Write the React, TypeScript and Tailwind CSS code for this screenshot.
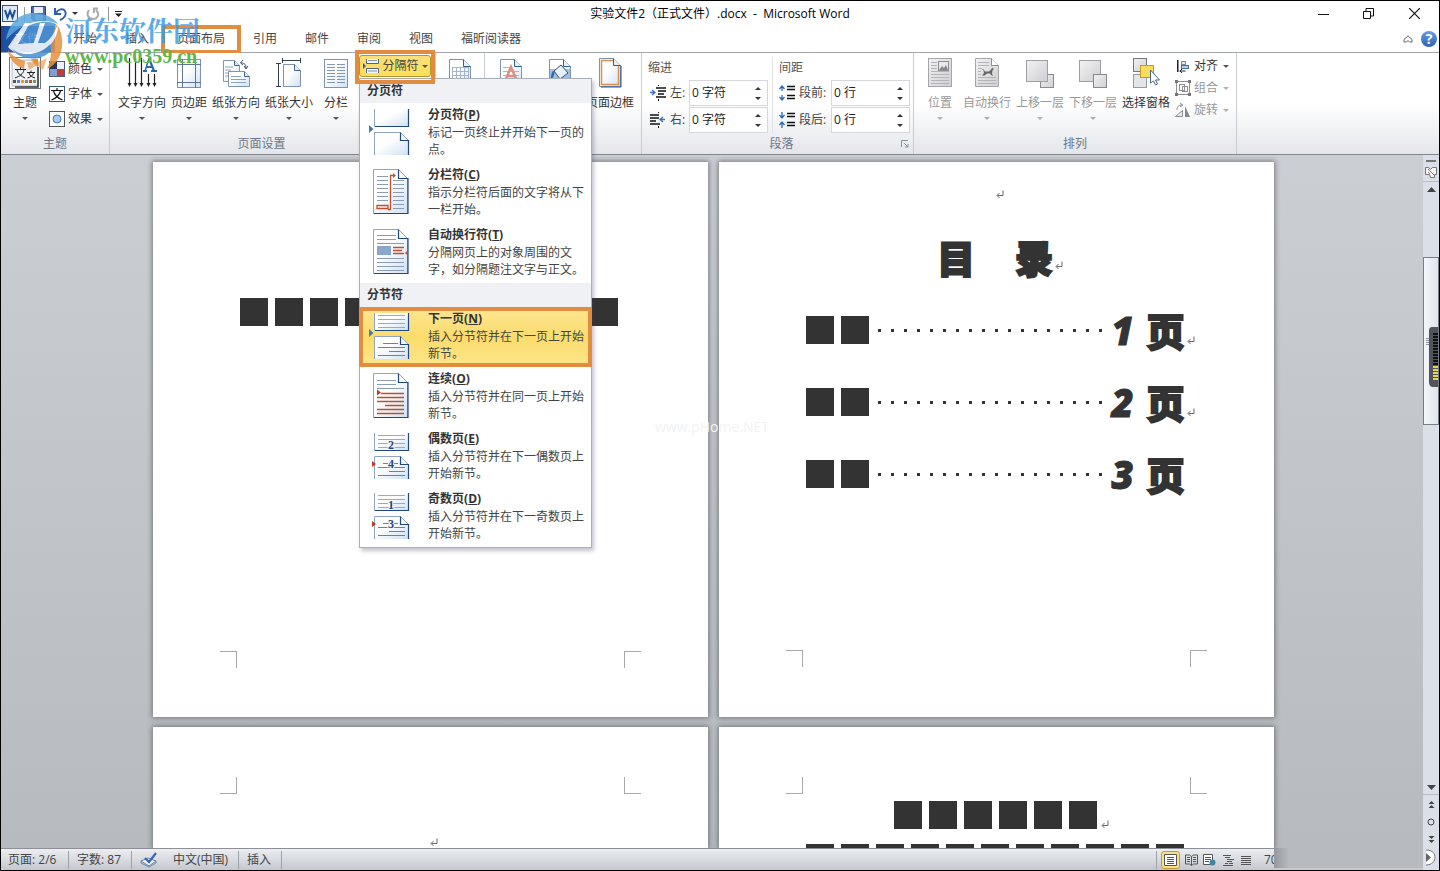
import type { ReactNode } from 'react';

const UI_FONT = "font-['Open_Sans','Noto_Sans_CJK_SC',sans-serif]";

/* ---------- small shared pieces ---------- */

function Caret({ dim = false }: { dim?: boolean }) {
  return (
    <svg width="6" height="3" viewBox="0 0 6 3" className={dim ? 'text-[#b0b0b0]' : 'text-[#555]'} aria-hidden="true">
      <path d="M0 0h6L3 3z" fill="currentColor" />
    </svg>
  );
}

function ReturnMark() {
  return (
    <svg width="8" height="9" viewBox="0 0 8 9" aria-hidden="true">
      <path d="M7 0.5V5.500H1.500M3.500 3L1 5.500L3.500 8" fill="none" stroke="#666" strokeWidth="1" />
    </svg>
  );
}

function Defs() {
  return (
    <svg width="0" height="0" className="absolute" aria-hidden="true">
      <defs>
        <linearGradient id="sheet" x1="0" y1="0" x2="1" y2="1">
          <stop offset="0.4" stopColor="#fff" />
          <stop offset="1" stopColor="#cfe0f5" />
        </linearGradient>
        <linearGradient id="grey" x1="0" y1="0" x2="1" y2="1">
          <stop offset="0" stopColor="#f2f2f4" />
          <stop offset="1" stopColor="#cfcfd4" />
        </linearGradient>
      </defs>
    </svg>
  );
}

/* ---------- ribbon icons ---------- */

const S = { fill: 'url(#sheet)', stroke: '#7d93b0' };

function ThemeIcon() {
  return (
    <svg width="32" height="32" viewBox="0 0 32 32">
      <rect x="0.500" y="0.500" width="31" height="31" fill="#fff" stroke="#6d7480" />
      <path d="M3 3h19l7 7v19H3z" fill="#eef1f5" stroke="#b7bdc6" />
      <path d="M22 2h7v8z" fill="#e8912c" />
      <path d="M29 10v20H6" fill="none" stroke="#333" strokeWidth="1.500" />
      <g stroke="#222" fill="none">
        <path d="M6 12.500h11M11.500 10v2M8 13c1 4 4 6 8 8M15 13c-1 4-4 6-9 8" />
        <path d="M18 15.500h8M22 13.500v2M20 16c1 3 3 4 6 5M24.500 16c-1 3-3 4-6 5" />
      </g>
      <path d="M4 23h3v3H4z" fill="#555" /><path d="M8 23h3v3H8z" fill="#5a84b5" />
      <path d="M12 23h3v3h-3z" fill="#e0a030" /><path d="M16 23h3v3h-3z" fill="#888" />
      <path d="M20 23h3v3h-3z" fill="#c05030" /><path d="M24 23h3v3h-3z" fill="#6a9a50" />
    </svg>
  );
}
function ColorsIcon() {
  return (
    <svg width="16" height="16" viewBox="0 0 16 16">
      <path d="M0 0h8v8H0z" fill="#24345c" /><path d="M8 0h8v8H8z" fill="#eef2f8" />
      <path d="M0 8h8v8H0z" fill="#7f9fcf" /><path d="M8 8h8v8H8z" fill="#c23b36" />
      <rect x="0.500" y="0.500" width="15" height="15" fill="none" stroke="#4a5d80" />
    </svg>
  );
}
function FontsIcon() {
  return (
    <svg width="16" height="16" viewBox="0 0 16 16">
      <rect x="0.500" y="0.500" width="15" height="15" fill="#fff" stroke="#3d5a86" />
      <path d="M2 4.500h12M8 2v2.500M4.500 5c1 4 4 7 9 9M11.500 5c-1 4-4 7-9 9" stroke="#111" fill="none" strokeWidth="1.200" />
    </svg>
  );
}
function EffectsIcon() {
  return (
    <svg width="16" height="16" viewBox="0 0 16 16">
      <rect x="0.500" y="0.500" width="15" height="15" fill="#fff" stroke="#555" />
      <circle cx="8" cy="8" r="4" fill="#a9cbee" stroke="#3f78b5" />
    </svg>
  );
}
function TextDirectionIcon() {
  return (
    <svg width="30" height="32" viewBox="0 0 30 32">
      <g stroke="#222" strokeWidth="1.200">
        <path d="M2.500 1v27M8.500 1v27M14.500 1v27M21.500 17v11M27.500 17v11" />
      </g>
      <path d="M0.500 26h4l-2 4zM6.500 26h4l-2 4zM12.500 26h4l-2 4zM19.500 26h4l-2 4zM25.500 26h4l-2 4z" fill="#222" />
      <path d="M18 14L22 1.500" stroke="#2f67ad" strokeWidth="1.500" fill="none" />
      <path d="M22 1.500L27 14M19 10h7M16 14h4M24 14h6" stroke="#2f67ad" strokeWidth="2.200" fill="none" />
    </svg>
  );
}
function MarginsIcon() {
  return (
    <svg width="26" height="32" viewBox="0 0 26 32">
      <rect x="1.500" y="2.500" width="23" height="28" {...S} />
      <path d="M6.500 2v29M19.500 2v29M1 7.500h24M1 25.500h24" stroke="#5f7696" />
    </svg>
  );
}
function OrientationIcon() {
  return (
    <svg width="30" height="32" viewBox="0 0 30 32">
      <path d="M2.500 3.500h11l5 5v16h-16z" {...S} />
      <path d="M13.500 3.500v5h5" fill="#dfe9f6" stroke="#41648f" />
      <path d="M4 10h8M4 13h6M4 16h4M4 19h4" stroke="#8aa2c2" />
      <path d="M7.500 14.500h16l5 5v10h-21z" {...S} />
      <path d="M23.500 14.500v5h5" fill="#dfe9f6" stroke="#41648f" />
      <path d="M10 19.500h10M10 22.500h15M10 25.500h15" stroke="#8aa2c2" />
      <path d="M20 6c4 0 5 2 5 5M23 9l2 3 2-3M22 3l-2.500 3L22 8" stroke="#3a5069" fill="none" />
    </svg>
  );
}
function SizeIcon() {
  return (
    <svg width="26" height="32" viewBox="0 0 26 32">
      <path d="M6 3.500h19M6.500 1v5M24.500 1v5M2.500 6v24M0 6.500h5M0 29.500h5" stroke="#31404f" />
      <path d="M7.500 7.500h11l6 6v16h-17z" {...S} />
      <path d="M18.500 7.500v6h6" fill="#e8f0fa" stroke="#41648f" />
    </svg>
  );
}
function ColumnsIcon() {
  return (
    <svg width="26" height="32" viewBox="0 0 26 32">
      <rect x="1.500" y="2.500" width="23" height="28" {...S} />
      <path d="M4 7.500h8M4 10.500h8M4 13.500h8M4 16.500h8M4 19.500h8M4 22.500h8M4 25.500h8M14 7.500h8M14 10.500h8M14 13.500h8M14 16.500h8M14 19.500h8M14 22.500h8M14 25.500h8" stroke="#8199bb" />
    </svg>
  );
}
function BreaksIcon() {
  return (
    <svg width="17" height="16" viewBox="0 0 17 16">
      <path d="M3.500 1v4.500h12V1M3.500 15v-4.500h12V15" fill="#f2f6fb" stroke="#53657c" />
      <path d="M5 2.500h9M5 13h9" stroke="#7a95b5" />
      <path d="M0 5l3 3-3 3z" fill="#2f5e96" />
    </svg>
  );
}
function FoldedSheet({ children }: { children?: ReactNode }) {
  return (
    <svg width="24" height="32" viewBox="0 0 24 32">
      <path d="M1.500 2.500h14l7 7v21h-21z" {...S} />
      {children}
      <path d="M15.500 2.500v7h7" fill="#e8f0fa" stroke="#2f5f8f" />
    </svg>
  );
}
function BorderSheetIcon() {
  return (
    <svg width="24" height="32" viewBox="0 0 24 32">
      <path d="M1.500 1.500h14l7 7v21h-21z" {...S} />
      <path d="M3.500 3.500h11.500l5.500 5.500v18.500h-17z" fill="none" stroke="#dc8f55" strokeWidth="1.500" />
      <path d="M15.500 1.500v7h7" fill="#e8f0fa" stroke="#2f5f8f" />
      <path d="M23 9v21H3" fill="none" stroke="#27588c" />
    </svg>
  );
}
function PositionIcon() {
  return (
    <svg width="26" height="32" viewBox="0 0 26 32">
      <rect x="1.500" y="1.500" width="23" height="28" fill="url(#grey)" stroke="#a6a6aa" />
      <path d="M4 5.500h6M4 8.500h6M4 11.500h6M4 14.500h18M4 17.500h18M4 20.500h18M4 23.500h18M4 26.500h18" stroke="#b4b4b8" />
      <rect x="11.500" y="4.500" width="10" height="9" fill="#e9e9eb" stroke="#8d8d92" />
      <path d="M12 13l3-4 2 2 2-3 2 5z" fill="#88888c" />
    </svg>
  );
}
function WrapIcon() {
  return (
    <svg width="26" height="32" viewBox="0 0 26 32">
      <path d="M1.500 1.500h16l7 7v21h-23z" fill="url(#grey)" stroke="#a6a6aa" />
      <path d="M17.500 1.500v7h7" fill="#fff" stroke="#8e8e92" />
      <path d="M4 5.500h11M4 8.500h11M4 11.500h4M4 14.500h3M4 17.500h3M4 20.500h18M4 23.500h18M4 26.500h18" stroke="#b4b4b8" />
      <path d="M7.500 12l2 .5 1.500 2h4l2.500-2.500.5-1.500 1 1 1 .5-1.500 1.500-.5 3 1 2h-1.500l-1.500-2h-3l-2.500 2H8l2-2.500-.5-2.500z" fill="#66666b" />
    </svg>
  );
}
function LayerIcon({ forward }: { forward: boolean }) {
  const big = <rect x="0.500" y="3.500" width="21" height="21" fill="url(#grey)" stroke="#9e9ea3" />;
  const small = <rect x="14.500" y="17.500" width="13" height="13" fill="url(#grey)" stroke="#88888d" />;
  return (
    <svg width="30" height="32" viewBox="-1 0 30 32">
      {forward ? small : big}
      {forward ? big : small}
    </svg>
  );
}
function SelectionPaneIcon() {
  return (
    <svg width="28" height="32" viewBox="0 0 28 32">
      <rect x="1.500" y="1.500" width="13" height="13" fill="url(#grey)" stroke="#77777b" />
      <rect x="1.500" y="17.500" width="13" height="13" fill="#e2e6eb" stroke="#99999d" />
      <rect x="8.500" y="8.500" width="13" height="12" fill="#fbdc5c" stroke="#c69a1c" />
      <path d="M18.500 13v13l3-2 2 4 2-1-2-4h4z" fill="#fff" stroke="#47678b" />
    </svg>
  );
}
function AlignIcon() {
  return (
    <svg width="16" height="16" viewBox="0 0 16 16">
      <path d="M2 2h1.500v12H2z" fill="#222" />
      <rect x="6.500" y="3.500" width="4" height="3" fill="#dfe8f4" stroke="#6f88a8" />
      <rect x="6.500" y="7.500" width="7" height="3" fill="#b9cde6" stroke="#4b6c94" />
      <path d="M4.500 13h6M7 11l-2 2 2 2" stroke="#222" fill="none" />
    </svg>
  );
}
function GroupIcon() {
  return (
    <svg width="16" height="16" viewBox="0 0 16 16">
      <g fill="none" stroke="#8f8f93"><rect x="1.500" y="1.500" width="13" height="13" /><rect x="4.500" y="4.500" width="5" height="6" /><rect x="7.500" y="6.500" width="5" height="5" /></g>
      <path d="M0 0h3v3H0zM13 0h3v3h-3zM0 13h3v3H0zM13 13h3v3h-3z" fill="#77777b" />
    </svg>
  );
}
function RotateIcon() {
  return (
    <svg width="16" height="16" viewBox="0 0 16 16">
      <path d="M0.500 14.500l7-6v6z" fill="#e7e7e9" stroke="#8f8f93" />
      <path d="M10 4v11h5z" fill="#88888c" />
      <path d="M2 8c0-4 2-5 5-5M5 1l3 2-3 2" fill="none" stroke="#8f8f93" />
    </svg>
  );
}
function IndentIcon({ right }: { right?: boolean }) {
  return (
    <svg width="16" height="16" viewBox="0 0 16 16">
      {right ? (
        <>
          <path d="M0 3h9M0 6h9M0 9h6M0 12h10" stroke="#111" strokeWidth="1.700" />
          <path d="M15 7.500h-4M13 5l-3 2.500L13 10" stroke="#3a73b8" strokeWidth="1.300" fill="none" />
        </>
      ) : (
        <>
          <path d="M6 3h10M8 6h8M8 9h6M6 12h10" stroke="#111" strokeWidth="1.700" />
          <path d="M0 7.500h5M2 5l3 2.500L2 10" stroke="#3a73b8" strokeWidth="1.300" fill="none" />
        </>
      )}
      <path d="M8.500 0v1M8.500 14v2" stroke="#111" />
    </svg>
  );
}
function SpacingIcon({ after }: { after?: boolean }) {
  return (
    <svg width="16" height="16" viewBox="0 0 16 16">
      <path d="M8 1.500h8M8 4.500h8M8 10.500h8M8 13.500h8" stroke="#111" strokeWidth="1.300" />
      <path d={after ? 'M3 0v5M0.500 3L3 6l2.500-3M3 16v-5M0.500 13L3 10l2.500 3' : 'M3 1v5M0.500 4L3 1l2.500 3M3 15v-5M0.500 12L3 15l2.500-3'} stroke="#2f6ab3" strokeWidth="1.300" fill="none" />
    </svg>
  );
}

/* ---------- ribbon controls ---------- */

function BigButton({ icon, label, dim, caret = true }: { icon: ReactNode; label: string; dim?: boolean; caret?: boolean }) {
  return (
    <button type="button" className={`flex min-w-9 flex-col items-center ${dim ? 'text-[#999]' : 'text-[#333]'}`}>
      {icon}
      <span className="mt-[5px] leading-[18px] whitespace-nowrap">{label}</span>
      {caret && <span className="mt-[5px]"><Caret dim={dim} /></span>}
    </button>
  );
}

function SmallButton({ icon, label, dim }: { icon: ReactNode; label: string; dim?: boolean }) {
  return (
    <button type="button" className={`flex items-center gap-[3px] leading-4 whitespace-nowrap ${dim ? 'text-[#999]' : 'text-[#333]'}`}>
      {icon}
      <span>{label}</span>
      <span className="ml-0.5"><Caret dim={dim} /></span>
    </button>
  );
}

function Group({ label, className, labelClass = '', children, corner }: { label?: string; className: string; labelClass?: string; children: ReactNode; corner?: boolean }) {
  return (
    <section className={`flex shrink-0 flex-col border-r border-[#c9ccd2] ${className}`}>
      <div className="flex h-20 items-start pt-1">{children}</div>
      <div className={`flex flex-1 items-center text-[#6b7689] ${labelClass}`}>
        <span className="flex-1 text-center leading-5">{label}</span>
        {corner && (
          <button type="button" aria-label="段落设置" className="-ml-5 mr-1">
            <svg width="8" height="8" viewBox="0 0 8 8"><path d="M0.500 7V0.500H7M3 3l4 4M7 4v3H4" fill="none" stroke="#8992a0" /></svg>
          </button>
        )}
      </div>
    </section>
  );
}

function Spinner({ id, icon, label, value }: { id: string; icon: ReactNode; label: string; value: string }) {
  return (
    <div className="flex h-[26px] items-center">
      {icon}
      <label htmlFor={id} className="ml-1 flex-1 whitespace-nowrap text-[#444]">{label}</label>
      <div className="flex h-[26px] w-[79px] items-center border border-[#d4d7dc] bg-white">
        <input id={id} defaultValue={value} className="w-full min-w-0 bg-transparent pl-0.5 text-[#222] outline-none" />
        <div className="flex flex-col gap-[7px] pr-1.5">
          <button type="button" aria-label="增加" className="block"><svg width="6" height="3" viewBox="0 0 6 3" className="block"><path d="M0 3h6L3 0z" fill="#333" /></svg></button>
          <button type="button" aria-label="减少" className="block"><svg width="6" height="3" viewBox="0 0 6 3" className="block"><path d="M0 0h6L3 3z" fill="#333" /></svg></button>
        </div>
      </div>
    </div>
  );
}

/* ---------- breaks menu ---------- */

type ArtKind = 'page' | 'column' | 'wrap' | 'next' | 'continuous' | 'even' | 'odd';

function SplitPages({ lines, num1, num2, tip }: { lines: boolean; num1?: string; num2?: string; tip: string }) {
  return (
    <>
      <path d="M9.500 6v17.500h34V6" fill="url(#sheet)" stroke="#8fa5c4" />
      <path d="M43.500 6v17.500H10" fill="none" stroke="#21477f" strokeWidth="1.200" />
      <path d="M9.500 52V29.500h26l8 8V52" fill="url(#sheet)" stroke="#8fa5c4" />
      <path d="M35.500 29.500v8h8V52" fill="none" stroke="#21477f" strokeWidth="1.200" />
      {lines && (
        <>
          <path d="M13 8.500h27M13 12.500h27M13 16.500h27M13 20.500h27" stroke="#9aaac0" />
          <path d="M18 36.500h15M13 40.500h27M24 44.500h16M13 48.500h27" stroke="#c4692f" strokeWidth="1.200" />
        </>
      )}
      {num1 && <text x="26" y="22" textAnchor="middle" fontFamily="Liberation Serif" fontWeight="700" fontSize="12" fill="#24497f" stroke="#f2f6fc" strokeWidth="2" paintOrder="stroke">{num1}</text>}
      {num2 && <text x="26" y="41" textAnchor="middle" fontFamily="Liberation Serif" fontWeight="700" fontSize="12" fill="#24497f" stroke="#f2f6fc" strokeWidth="2" paintOrder="stroke">{num2}</text>}
      {num2 ? <path d="M7 34l4 3-4 3z" fill={tip} /> : <path d="M4 22l4.500 4L4 30z" fill={tip} />}
    </>
  );
}

function FullPage({ children }: { children: ReactNode }) {
  return (
    <>
      <path d="M8.500 6.500h25l9 9v35h-34z" fill="url(#sheet)" stroke="#8fa5c4" />
      <path d="M33.500 6.500v9h9.500V50.500H9" fill="none" stroke="#21477f" strokeWidth="1.200" />
      {children}
    </>
  );
}

function Art({ kind }: { kind: ArtKind }) {
  return (
    <svg width="48" height="54" viewBox="0 2 48 54" className="shrink-0" aria-hidden="true">
      {kind === 'page' && <SplitPages lines={false} tip="#4d79ae" />}
      {kind === 'next' && <SplitPages lines tip="#4d79ae" />}
      {kind === 'even' && <SplitPages lines num1="2" num2="4" tip="#c23b20" />}
      {kind === 'odd' && <SplitPages lines num1="1" num2="3" tip="#c23b20" />}
      {kind === 'column' && (
        <FullPage>
          <path d="M12 13.500h11M12 17.500h11M12 21.500h11M12 25.500h11M12 29.500h11M12 33.500h11M12 37.500h11M28 17.500h11M28 21.500h11M28 25.500h11M28 29.500h11M28 33.500h11M28 37.500h11M28 41.500h11M28 45.500h11" stroke="#8c9db5" />
          <path d="M12 42.500h11v3H12zM23 46.500h2.500v-34H29" fill="none" stroke="#c0502a" strokeWidth="1.300" />
          <path d="M28 10l3 2.500-3 2.500z" fill="#c0502a" />
        </FullPage>
      )}
      {kind === 'wrap' && (
        <FullPage>
          <path d="M12 12.500h19M12 16.500h19M12 20.500h27M12 35.500h27M12 39.500h27M12 43.500h27M12 47.500h27" stroke="#8c9db5" />
          <path d="M12 23h14v9H12z" fill="#8ba6cb" />
          <path d="M28 24.500h11M28 27.500h9M28 30.500h11" stroke="#c0502a" strokeWidth="1.300" />
          <path d="M43 27v6l-3-3z" fill="#c0502a" />
        </FullPage>
      )}
      {kind === 'continuous' && (
        <FullPage>
          <path d="M12 13.500h19M12 17.500h19M12 21.500h27" stroke="#8c9db5" />
          <path d="M16 26.500h23M12 30.500h27M12 34.500h27M20 38.500h19M12 42.500h27M12 46.500h27" stroke="#c0502a" strokeWidth="1.300" />
          <path d="M12 22.500l4 3-4 3z" fill="#c23b20" />
        </FullPage>
      )}
    </svg>
  );
}

interface BreakItem { art: ArtKind; title: string; hotkey: string; text: string; active?: boolean }

const PAGE_BREAKS: BreakItem[] = [
  { art: 'page', title: '分页符', hotkey: 'P', text: '标记一页终止并开始下一页的点。' },
  { art: 'column', title: '分栏符', hotkey: 'C', text: '指示分栏符后面的文字将从下一栏开始。' },
  { art: 'wrap', title: '自动换行符', hotkey: 'T', text: '分隔网页上的对象周围的文字，如分隔题注文字与正文。' },
];
const SECTION_BREAKS: BreakItem[] = [
  { art: 'next', title: '下一页', hotkey: 'N', text: '插入分节符并在下一页上开始新节。', active: true },
  { art: 'continuous', title: '连续', hotkey: 'O', text: '插入分节符并在同一页上开始新节。' },
  { art: 'even', title: '偶数页', hotkey: 'E', text: '插入分节符并在下一偶数页上开始新节。' },
  { art: 'odd', title: '奇数页', hotkey: 'D', text: '插入分节符并在下一奇数页上开始新节。' },
];

function MenuSection({ heading, items }: { heading: string; items: BreakItem[] }) {
  return (
    <>
      <h3 className="h-6 bg-[#eff1f5] pl-[7px] leading-6 font-bold">{heading}</h3>
      {items.map((it) => (
        <button
          key={it.title}
          type="button"
          role="menuitem"
          className={`relative flex h-[60px] w-full items-start gap-[15px] pt-0.5 pl-[5px] text-left ${it.active ? 'bg-linear-to-b from-[#fde694] via-[#fbdc6c] to-[#fde68a]' : ''}`}
        >
          <Art kind={it.art} />
          <span className="block w-40">
            <span className="block leading-[19px] font-bold">{it.title}(<u>{it.hotkey}</u>)</span>
            <span className="block leading-[17px] text-[#444]">{it.text}</span>
          </span>
          {it.active && <span className="absolute -inset-x-px inset-y-0 border-4 border-[#e18c3f]" />}
        </button>
      ))}
    </>
  );
}

function BreaksMenu() {
  return (
    <div role="menu" className="absolute top-full left-0 z-20 w-[233px] border border-[#a9aeb8] bg-white text-[#333] shadow-[2px_3px_4px_rgba(60,60,100,0.3)]">
      <MenuSection heading="分页符" items={PAGE_BREAKS} />
      <MenuSection heading="分节符" items={SECTION_BREAKS} />
    </div>
  );
}

/* ---------- window chrome ---------- */

function TitleBar() {
  return (
    <header className="grid h-[25px] grid-cols-[1fr_auto_1fr] items-center">
      <div className="flex items-center gap-1.5 pl-px">
        <svg width="16" height="17" viewBox="0 0 16 17"><rect x="0.500" y="0.500" width="15" height="16" fill="#dce9f7" stroke="#2b5797" /><path d="M3 5l2.500 7.500L8 6l2.500 6.500L13 5" fill="none" stroke="#1d4e96" strokeWidth="2" /></svg>
        <i className="h-3.5 w-px bg-[#999]" />
        <button type="button" aria-label="保存"><svg width="15" height="15" viewBox="0 0 15 15" className="block"><path d="M0.500 0.500h14v14h-12l-2-2z" fill="#5266a8" stroke="#33427d" /><path d="M3 1h9v6H3z" fill="#e9eefa" /><path d="M4 9h8v5H4z" fill="#bcc7e4" /></svg></button>
        <button type="button" aria-label="撤消" className="ml-0.5 flex items-center gap-1">
          <svg width="14" height="14" viewBox="0 0 14 14"><path d="M1 1v6h6M2 6c2-4 7-5 9-2s0 7-5 9" fill="none" stroke="#2f5fb3" strokeWidth="2" /></svg>
          <svg width="6" height="3" viewBox="0 0 6 3"><path d="M0 0h6L3 3z" fill="#333" /></svg>
        </button>
        <button type="button" aria-label="重复" className="ml-0.5"><svg width="14" height="14" viewBox="0 0 14 14" className="block"><path d="M3 3c-3 4-1 9 4 9s7-5 3-9M12 1.500H8V6" fill="none" stroke="#aaa" strokeWidth="2" /></svg></button>
        <i className="ml-0.5 h-3.5 w-px bg-[#999]" />
        <button type="button" aria-label="自定义快速访问工具栏"><svg width="7" height="6" viewBox="0 0 7 6" className="block"><path d="M0 0h7v1H0zM0 2.500h7L3.500 6z" fill="#222" /></svg></button>
      </div>
      <h1 className="whitespace-pre text-black">实验文件2（正式文件）.docx  -  Microsoft Word</h1>
      <div className="flex justify-end text-[#111]">
        <button type="button" aria-label="最小化" className="flex w-[45px] justify-center"><svg width="11" height="11" viewBox="0 0 11 11"><path d="M0 6.500h11" stroke="currentColor" /></svg></button>
        <button type="button" aria-label="还原" className="flex w-[45px] justify-center"><svg width="11" height="11" viewBox="0 0 11 11"><path d="M0.500 3.500h7v7h-7zM3 3V0.500h7.500V8H8" fill="none" stroke="currentColor" /></svg></button>
        <button type="button" aria-label="关闭" className="mr-0.5 flex w-[46px] justify-center"><svg width="11" height="11" viewBox="0 0 11 11"><path d="M0 0l11 11M11 0L0 11" stroke="currentColor" strokeWidth="1.200" /></svg></button>
      </div>
    </header>
  );
}

const TABS = ['开始', '插入', '页面布局', '引用', '邮件', '审阅', '视图', '福昕阅读器'];

function TabBar() {
  return (
    <nav className="flex h-[27px] items-stretch border-b border-[#a3a6ab] text-[#444]">
      <button type="button" className="mr-1 w-[54px] bg-linear-to-r from-[#1c4aa0] to-[#3f78c8] pl-3.5 text-left text-white">文件</button>
      {TABS.map((t) => (
        <button key={t} type="button" className="relative px-3.5">
          {t}
          {t === '页面布局' && <span className="absolute -inset-x-0.5 -top-px -bottom-0.5 border-4 border-[#e18c3f]" />}
        </button>
      ))}
      <div className="ml-auto flex items-center gap-2 pr-0.5">
        <button type="button" aria-label="功能区最小化"><svg width="10" height="8" viewBox="0 0 10 8" className="block"><path d="M1 4.500L5 0.800L9 4.500V7H6.500L5 5.500L3.500 7H1z" fill="none" stroke="#666" /></svg></button>
        <button type="button" aria-label="帮助" className="h-4 w-4 rounded-full bg-linear-to-b from-[#6a9ee0] to-[#2d62b5] text-sm leading-4 font-bold text-white">?</button>
      </div>
    </nav>
  );
}

function Ribbon() {
  return (
    <div className="relative z-10 flex h-[102px] border-b border-[#83868b] bg-linear-to-b from-white from-50% to-[#e3e6ea]">
      <Group label="主题" className="w-[109px]">
        <div className="flex w-full pl-1.5">
          <BigButton icon={<ThemeIcon />} label="主题" />
          <div className="ml-1.5 flex flex-col gap-[9px] pt-1">
            <SmallButton icon={<ColorsIcon />} label="颜色" />
            <SmallButton icon={<FontsIcon />} label="字体" />
            <SmallButton icon={<EffectsIcon />} label="效果" />
          </div>
        </div>
      </Group>
      <Group label="页面设置" className="w-[326px]" labelClass="pr-[22px]">
        <div className="flex gap-[5px] pl-2">
          <BigButton icon={<TextDirectionIcon />} label="文字方向" />
          <BigButton icon={<MarginsIcon />} label="页边距" />
          <BigButton icon={<OrientationIcon />} label="纸张方向" />
          <BigButton icon={<SizeIcon />} label="纸张大小" />
          <BigButton icon={<ColumnsIcon />} label="分栏" />
          <div className="relative -mt-0.5 h-[23px]">
            <button type="button" aria-haspopup="menu" aria-expanded="true" className="flex h-[22px] w-[72px] items-center justify-center gap-[3px] rounded-[3px] border border-[#b8962e] bg-linear-to-b from-[#fbdf7a] to-[#fbe05a] whitespace-nowrap text-[#444]">
              <BreaksIcon />
              分隔符
              <Caret />
            </button>
            <BreaksMenu />
            <span className="pointer-events-none absolute -top-[5px] -left-1 z-30 h-[34px] w-20 border-4 border-[#e18c3f]" />
          </div>
        </div>
      </Group>
      <Group className="w-[49px]">
        <button type="button" aria-label="稿纸设置" className="mx-auto">
          <FoldedSheet><path d="M4 10.500h16M4 14.500h16M4 18.500h16M4 22.500h16M4.500 10v13M8.500 10v13M12.500 10v13M16.500 10v13M20.500 10v13" stroke="#a3b4cd" /></FoldedSheet>
        </button>
      </Group>
      <Group className="w-[157px]">
        <button type="button" aria-label="水印" className="ml-3.5">
          <FoldedSheet>
            <path d="M4 10.500h9M4 14.500h16M4 18.500h16" stroke="#a9b8d0" />
            <path d="M6 24l6-14 6 14M8 19h8" stroke="#dd8f84" strokeWidth="2.500" fill="none" />
          </FoldedSheet>
        </button>
        <button type="button" aria-label="页面颜色" className="ml-[25px]">
          <FoldedSheet>
            <path d="M2 12h20v18H2z" fill="#9dc0e8" />
            <path d="M6 14l7-6 7 8-8 6z" fill="#eaf0f8" stroke="#34506f" />
            <path d="M5 14c-2 3-2 5-2 8 3-1 3-5 4-8z" fill="#2f67ad" />
          </FoldedSheet>
        </button>
        <div className="ml-3.5"><BigButton icon={<BorderSheetIcon />} label="页面边框" caret={false} /></div>
      </Group>
      <Group label="段落" className="w-[272px]" corner>
        <div className="flex w-full">
          <div className="flex w-[131px] flex-col border-r border-[#dfe2e6] pr-1 pl-2">
            <span className="-ml-0.5 h-[23px] leading-[22px] text-[#555]">缩进</span>
            <Spinner id="indent-left" icon={<IndentIcon />} label="左:" value="0 字符" />
            <div className="h-px" />
            <Spinner id="indent-right" icon={<IndentIcon right />} label="右:" value="0 字符" />
          </div>
          <div className="flex w-[137px] flex-col pl-1.5">
            <span className="h-[23px] leading-[22px] text-[#555]">间距</span>
            <Spinner id="space-before" icon={<SpacingIcon />} label="段前:" value="0 行" />
            <div className="h-px" />
            <Spinner id="space-after" icon={<SpacingIcon after />} label="段后:" value="0 行" />
          </div>
        </div>
      </Group>
      <Group label="排列" className="w-[323px]">
        <div className="flex gap-[5px] pl-2">
          <BigButton icon={<PositionIcon />} label="位置" dim />
          <BigButton icon={<WrapIcon />} label="自动换行" dim />
          <BigButton icon={<LayerIcon forward />} label="上移一层" dim />
          <BigButton icon={<LayerIcon forward={false} />} label="下移一层" dim />
          <BigButton icon={<SelectionPaneIcon />} label="选择窗格" caret={false} />
          <div className="flex flex-col gap-1.5 pt-px">
            <SmallButton icon={<AlignIcon />} label="对齐" />
            <SmallButton icon={<GroupIcon />} label="组合" dim />
            <SmallButton icon={<RotateIcon />} label="旋转" dim />
          </div>
        </div>
      </Group>
    </div>
  );
}

/* ---------- document pages ---------- */

function Blocks({ count }: { count: number }) {
  return (
    <div className="flex gap-[7px]">
      {Array.from({ length: count }, (_, i) => <i key={i} className="h-7 w-7 bg-[#333]" />)}
    </div>
  );
}

function Corners({ bottom, className }: { bottom?: boolean; className: string }) {
  const edge = bottom ? 'border-t' : 'border-b';
  return (
    <div className={`flex justify-between px-[67px] ${className}`}>
      <i className={`h-[17px] w-[17px] border-r border-[#aaa] ${edge}`} />
      <i className={`h-[17px] w-[17px] border-l border-[#aaa] ${edge}`} />
    </div>
  );
}

const PAGE = 'flex w-[555px] shrink-0 flex-col bg-white shadow-[0_0_5px_1px_rgba(90,95,102,0.75)]';
const DISPLAY = "font-['Noto_Sans_CJK_SC',sans-serif] text-[38px] font-black text-[#333] [-webkit-text-stroke:2px_#333]";

function TocRow({ n, mark }: { n: string; mark: boolean }) {
  return (
    <div className="flex h-[72px] items-center">
      <Blocks count={2} />
      <div className="ml-[9px] flex w-[225px] justify-between">
        {Array.from({ length: 18 }, (_, i) => <i key={i} className="h-[3px] w-[3px] bg-[#333]" />)}
      </div>
      <span className="w-10 text-center font-['Open_Sans',sans-serif] text-[38px] leading-none font-extrabold text-[#333] italic [-webkit-text-stroke:1px_#333]">{n}</span>
      <span className={`ml-1 leading-none ${DISPLAY}`}>页</span>
      {mark && <span className="mt-5 ml-0.5"><ReturnMark /></span>}
    </div>
  );
}

function Workspace() {
  return (
    <main className="relative flex min-h-0 flex-1 flex-col items-center gap-2.5 overflow-hidden bg-linear-to-b from-[#cbced3] to-[#b7babe] pt-[7px] pl-0.5">
      <div className="flex shrink-0 gap-[11px]">
        <article className={PAGE}>
          <div className="mt-[136px] ml-[87px]"><Blocks count={11} /></div>
          <Corners bottom className="mt-auto mb-[49px]" />
        </article>
        <article className={`h-[555px] ${PAGE}`}>
          <div className="mt-7 ml-[277px]"><ReturnMark /></div>
          <div className="mt-7 flex items-center justify-center pl-2">
            <h2 className={`flex gap-10 leading-[60px] ${DISPLAY}`}><span>目</span><span>录</span></h2>
            <span className="mt-4 ml-0.5"><ReturnMark /></span>
          </div>
          <div className="mt-[7px] ml-[87px]">
            <TocRow n="1" mark />
            <TocRow n="2" mark />
            <TocRow n="3" mark={false} />
          </div>
          <Corners bottom className="mt-auto mb-[50px]" />
        </article>
      </div>
      <div className="flex min-h-0 flex-1 gap-[11px]">
        <article className={PAGE}>
          <Corners className="mt-[50px]" />
          <div className="mt-11 ml-[277px]"><ReturnMark /></div>
        </article>
        <article className={PAGE}>
          <Corners className="mt-[50px]" />
          <div className="mt-[7px] flex items-end gap-1 pl-[175px]"><Blocks count={6} /><ReturnMark /></div>
          <div className="mt-[15px] h-1 overflow-hidden pl-[87px]"><Blocks count={11} /></div>
        </article>
      </div>
      <span className="absolute top-[264px] left-[654px] text-sm leading-4 text-[#f1f3f5]">www.pHome.NET</span>
    </main>
  );
}

/* ---------- status bar and scroll bar ---------- */

function Cell({ children, className = '' }: { children: ReactNode; className?: string }) {
  return <span className={`flex h-[18px] items-center border-r border-[#9da1a8] ${className}`}>{children}</span>;
}

function StatusBar() {
  return (
    <footer className="flex h-[22px] shrink-0 items-center border-t border-[#8d9197] bg-linear-to-b from-[#eceef1] to-[#c4c8ce] text-[#444]">
      <Cell className="w-[68px] pl-[7px]">页面: 2/6</Cell>
      <Cell className="w-[63px] pl-2">字数: 87</Cell>
      <Cell className="w-[107px] gap-[15px] pl-2">
        <svg width="18" height="16" viewBox="0 0 18 16"><path d="M1 9l7-3 8 3-7 5z" fill="#eef3fa" stroke="#6b84ab" /><path d="M1 9v2l8 4 7-4V9" fill="none" stroke="#6b84ab" /><path d="M5 6l4 4 7-9" fill="none" stroke="#3a66b8" strokeWidth="2.200" /></svg>
        <span className="whitespace-nowrap">中文(中国)</span>
      </Cell>
      <Cell className="w-[43px] pl-2">插入</Cell>
      <Cell className="ml-auto w-1">{null}</Cell>
      <div className="flex items-center gap-[5px] pl-1 text-[#555]">
        <button type="button" aria-label="页面视图" className="flex h-[18px] w-[19px] items-center justify-center rounded-[3px] border border-[#c9992b] bg-[#fbe08a]">
          <svg width="13" height="12" viewBox="0 0 13 12"><path d="M0.500 0.500h12v11H.5z" fill="#fff" stroke="#555" /><path d="M3 3.500h7M3 5.500h7M3 7.500h7M3 9.500h7" stroke="#555" /></svg>
        </button>
        <button type="button" aria-label="阅读版式"><svg width="13" height="12" viewBox="0 0 13 12" className="block"><path d="M6.500 2.500L4.500 1H.5v9h4l2 1.500 2-1.500h4V1h-4zM6.500 2.500v9M2 3.500h3M2 5.500h3M2 7.500h3M8 3.500h3M8 5.500h3M8 7.500h3" fill="none" stroke="currentColor" /></svg></button>
        <button type="button" aria-label="Web 版式"><svg width="13" height="12" viewBox="0 0 13 12" className="block"><path d="M0.500 0.500h9v10h-9z" fill="#fff" stroke="currentColor" /><path d="M2 3.500h6M2 5.500h6M2 7.500h4" stroke="currentColor" /><circle cx="9.500" cy="8.500" r="3" fill="#3f86a5" /></svg></button>
        <button type="button" aria-label="大纲" className="ml-px"><svg width="13" height="12" viewBox="0 0 13 12" className="block"><path d="M1 1.500h8M3 3.500h5M5 5.500h7M5 7.500h5M3 9.500h3M7 9.500h4M1 11.500h10" stroke="currentColor" /></svg></button>
        <button type="button" aria-label="草稿"><svg width="12" height="12" viewBox="0 0 12 12" className="block"><path d="M1 2.500h10M1 4.500h10M1 6.500h10M1 8.500h10M1 10.500h10" stroke="currentColor" /></svg></button>
      </div>
      <span className="ml-3 w-2.5 overflow-hidden">70</span>
      <i className="mb-[3px] h-5 w-[149px] bg-linear-to-r from-[#94989d] to-[#b7babe] to-10%" />
    </footer>
  );
}

function ScrollBar() {
  return (
    <aside className="relative flex w-4 shrink-0 flex-col items-center bg-[#dbe0e8] text-[#444]">
      <i className="mt-[5px] h-0.5 w-2.5 bg-[#777]" />
      <button type="button" aria-label="标尺" className="mt-1"><svg width="12" height="13" viewBox="0 0 12 13" className="block"><path d="M0.500 1.500h3l2 2 2-2h4v7h-2v3h-4l-1-3h-4z" fill="#f5f5f7" stroke="#777" /><path d="M3 3l6 6M3 6l2 2" stroke="#a66" /></svg></button>
      <i className="mt-0.5 h-px w-full bg-[#b7bcc5]" />
      <button type="button" aria-label="向上滚动" className="mt-[5px]"><svg width="9" height="5" viewBox="0 0 9 5" className="block"><path d="M0 5h9L4.500 0z" fill="currentColor" /></svg></button>
      <div className="relative mt-[65px] h-[168px] w-full border border-[#777d87] bg-linear-to-r from-[#f4f7fb] to-[#dfe4ec]">
        <svg width="12" height="60" viewBox="-3 0 12 60" className="absolute top-[69px] right-0">
          <path d="M9 0H3Q0 0 0 4v51q0 5 4 5h5z" fill="#50555d" />
          <path d="M6.500 6v33" stroke="#111" strokeWidth="5" strokeDasharray="2 1" />
          <path d="M6.500 39v14" stroke="#ead24e" strokeWidth="5" strokeDasharray="2 1" />
          <path d="M-3 11.500h3M-3 13.500h3M-3 15.500h3M-3 17.500h3" stroke="#8a8f98" />
        </svg>
      </div>
      <button type="button" aria-label="向下滚动" className="mt-auto"><svg width="9" height="5" viewBox="0 0 9 5" className="block"><path d="M0 0h9L4.500 5z" fill="currentColor" /></svg></button>
      <i className="mt-1 h-px w-full bg-[#b7bcc5]" />
      <button type="button" aria-label="前一页" className="mt-1.5"><svg width="7" height="7" viewBox="0 0 7 7" className="block"><path d="M0.500 3h6L3.500 0zM0.500 7h6L3.500 4z" fill="currentColor" /></svg></button>
      <button type="button" aria-label="选择浏览对象" className="mt-2.5"><svg width="8" height="8" viewBox="0 0 8 8" className="block"><circle cx="4" cy="4" r="3" fill="none" stroke="currentColor" /></svg></button>
      <button type="button" aria-label="下一页" className="mt-2.5"><svg width="7" height="7" viewBox="0 0 7 7" className="block"><path d="M0.500 0h6L3.500 3zM0.500 4h6L3.500 7z" fill="currentColor" /></svg></button>
      <button type="button" aria-label="放大" className="mt-1.5 mb-1"><svg width="16" height="17" viewBox="0 0 16 17" className="block"><path d="M3 1c7 0 9 4 9 7.500S9 16 3 16" fill="#fff" stroke="#777" /><path d="M3 4l5 4.500L3 13zM3 8.500h6" fill="#666" /></svg></button>
    </aside>
  );
}

function SiteMark() {
  return (
    <div className="pointer-events-none absolute top-[11px] left-1 z-20 flex items-start">
      <svg width="60" height="60" viewBox="0 0 60 60" opacity="0.85">
        <path d="M1 28C4 10 15 1 29 1c11 0 20 5 24 11C40 6 18 8 1 28z" fill="#5ba7dc" />
        <path d="M4 34C12 16 34 5 51 12L46 38C38 50 14 50 4 34z" fill="#4a90d2" />
        <path d="M52 12c9 14 7 37-10 45 4-9 4-14 4-21 0-9 2-17 6-24z" fill="#e5923f" />
        <path d="M3 38c4 6 10 9 17 11l-1 8C10 54 4 47 3 38z" fill="#e5923f" />
        <path d="M22 50c6 1 14 0 20-4l-4 12-6-5-8 5z" fill="#e5923f" opacity="0.7" />
        <path d="M3 35L20 11h5L13 32l16-1 6-20h5l-7 20h7c6-4 10-11 13-19 1 16-12 29-28 30C15 43 7 40 3 35z" fill="#fff" />
        <path d="M7 37c8 7 28 8 38-5-4 14-24 20-38 5z" fill="#4a90d2" />
      </svg>
      <div className="flex flex-col">
        <span className="mt-0.5 font-['Noto_Serif_CJK_SC','Noto_Sans_CJK_SC',serif] text-[27px] leading-8 font-bold whitespace-nowrap text-[#3f9be6]/85">河东软件园</span>
        <span className="font-['Liberation_Serif',serif] text-xl leading-5 font-bold whitespace-nowrap text-[#5fb749]">www.pc0359.cn</span>
      </div>
    </div>
  );
}

export default function App() {
  return (
    <div className={`relative flex h-screen flex-col overflow-hidden border border-black bg-white text-xs ${UI_FONT}`}>
      <Defs />
      <TitleBar />
      <TabBar />
      <Ribbon />
      <div className="flex min-h-0 flex-1">
        <div className="flex min-w-0 flex-1 flex-col">
          <Workspace />
          <StatusBar />
        </div>
        <ScrollBar />
      </div>
      <SiteMark />
    </div>
  );
}
